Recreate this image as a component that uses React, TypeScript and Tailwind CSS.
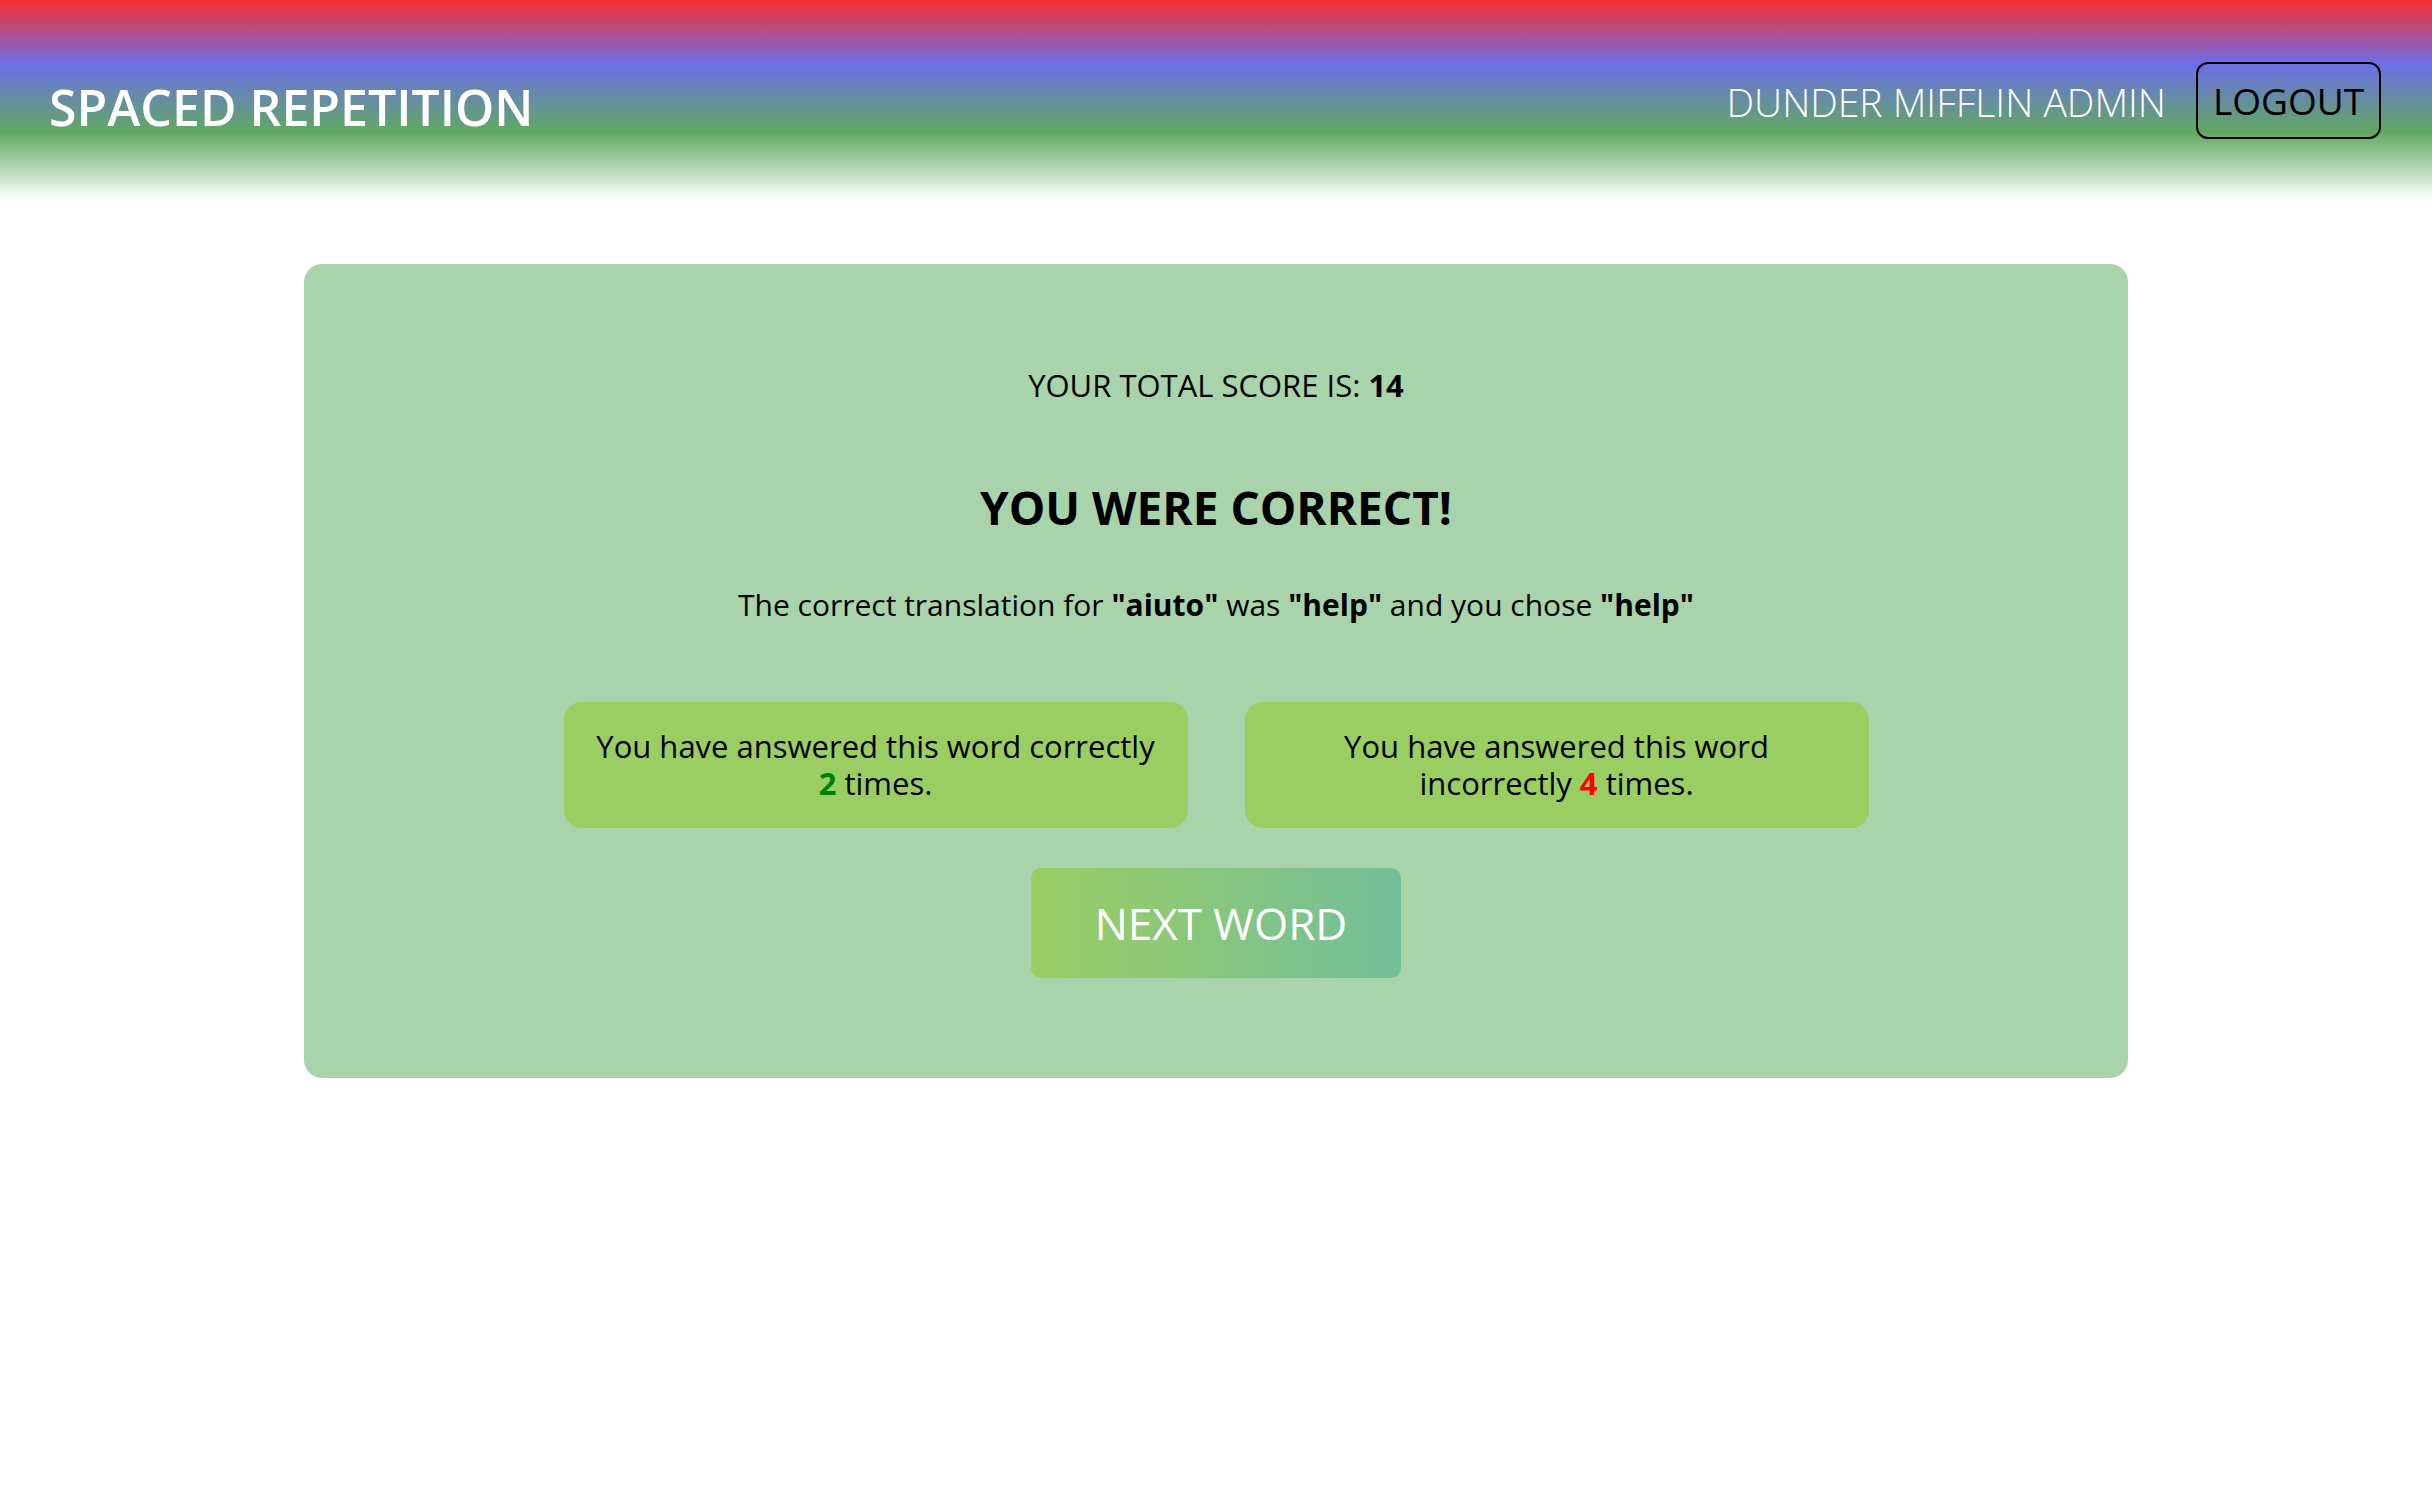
import React from 'react';

const font = { fontFamily: '"Open Sans", "Noto Sans", sans-serif' };

function Header() {
  return (
    <header className="flex h-[200px] items-center justify-between bg-[linear-gradient(to_bottom,#f82c2e_0%,#6c6fe6_32%,#61a862_66%,#ffffff_100%)] pl-[49px] pr-[51px]">
      <h1 className="mt-[14px] text-[50px] leading-none font-semibold text-white">SPACED REPETITION</h1>
      <div className="flex items-center gap-[30px]">
        <span className="mt-[3px] text-[39px] leading-none font-light text-white">DUNDER MIFFLIN ADMIN</span>
        <button className="h-[77px] w-[185px] rounded-[12px] border-2 border-black text-[37px] leading-none text-black">
          LOGOUT
        </button>
      </div>
    </header>
  );
}

function CountBox({ children }: { children: React.ReactNode }) {
  return (
    <div className="flex h-[126px] w-[624px] items-center justify-center rounded-[18px] bg-[#9acd62] px-[27px] text-center text-[31px] leading-[37px] text-black">
      <p>{children}</p>
    </div>
  );
}

export default function App() {
  return (
    <div className="min-h-[1498px] bg-white" style={font}>
      <Header />
      <main className="flex justify-center pt-[64px]">
        <section className="flex w-[1824px] flex-col items-center rounded-[18px] bg-[#a9d3aa] pt-[104px] pb-[100px] text-black">
          <p className="text-[31px] leading-[34px]">
            YOUR TOTAL SCORE IS: <b className="font-bold">14</b>
          </p>
          <h2 className="mt-[80px] text-[46px] leading-[50px] font-bold">YOU WERE CORRECT!</h2>
          <p className="mt-[54px] text-[30px] leading-[37px]">
            The correct translation for <b>"aiuto"</b> was <b>"help"</b> and you chose <b>"help"</b>
          </p>
          <div className="mt-[79px] flex gap-[57px]">
            <CountBox>
              You have answered this word correctly <b className="text-[#008000]">2</b> times.
            </CountBox>
            <CountBox>
              You have answered this word incorrectly <b className="text-[#ff0000]">4</b> times.
            </CountBox>
          </div>
          <button className="mt-[40px] h-[110px] w-[370px] rounded-[10px] bg-[linear-gradient(to_right,#9acd62,#74bf9b)] pl-[10px] text-[44px] text-white">
            NEXT WORD
          </button>
        </section>
      </main>
    </div>
  );
}
